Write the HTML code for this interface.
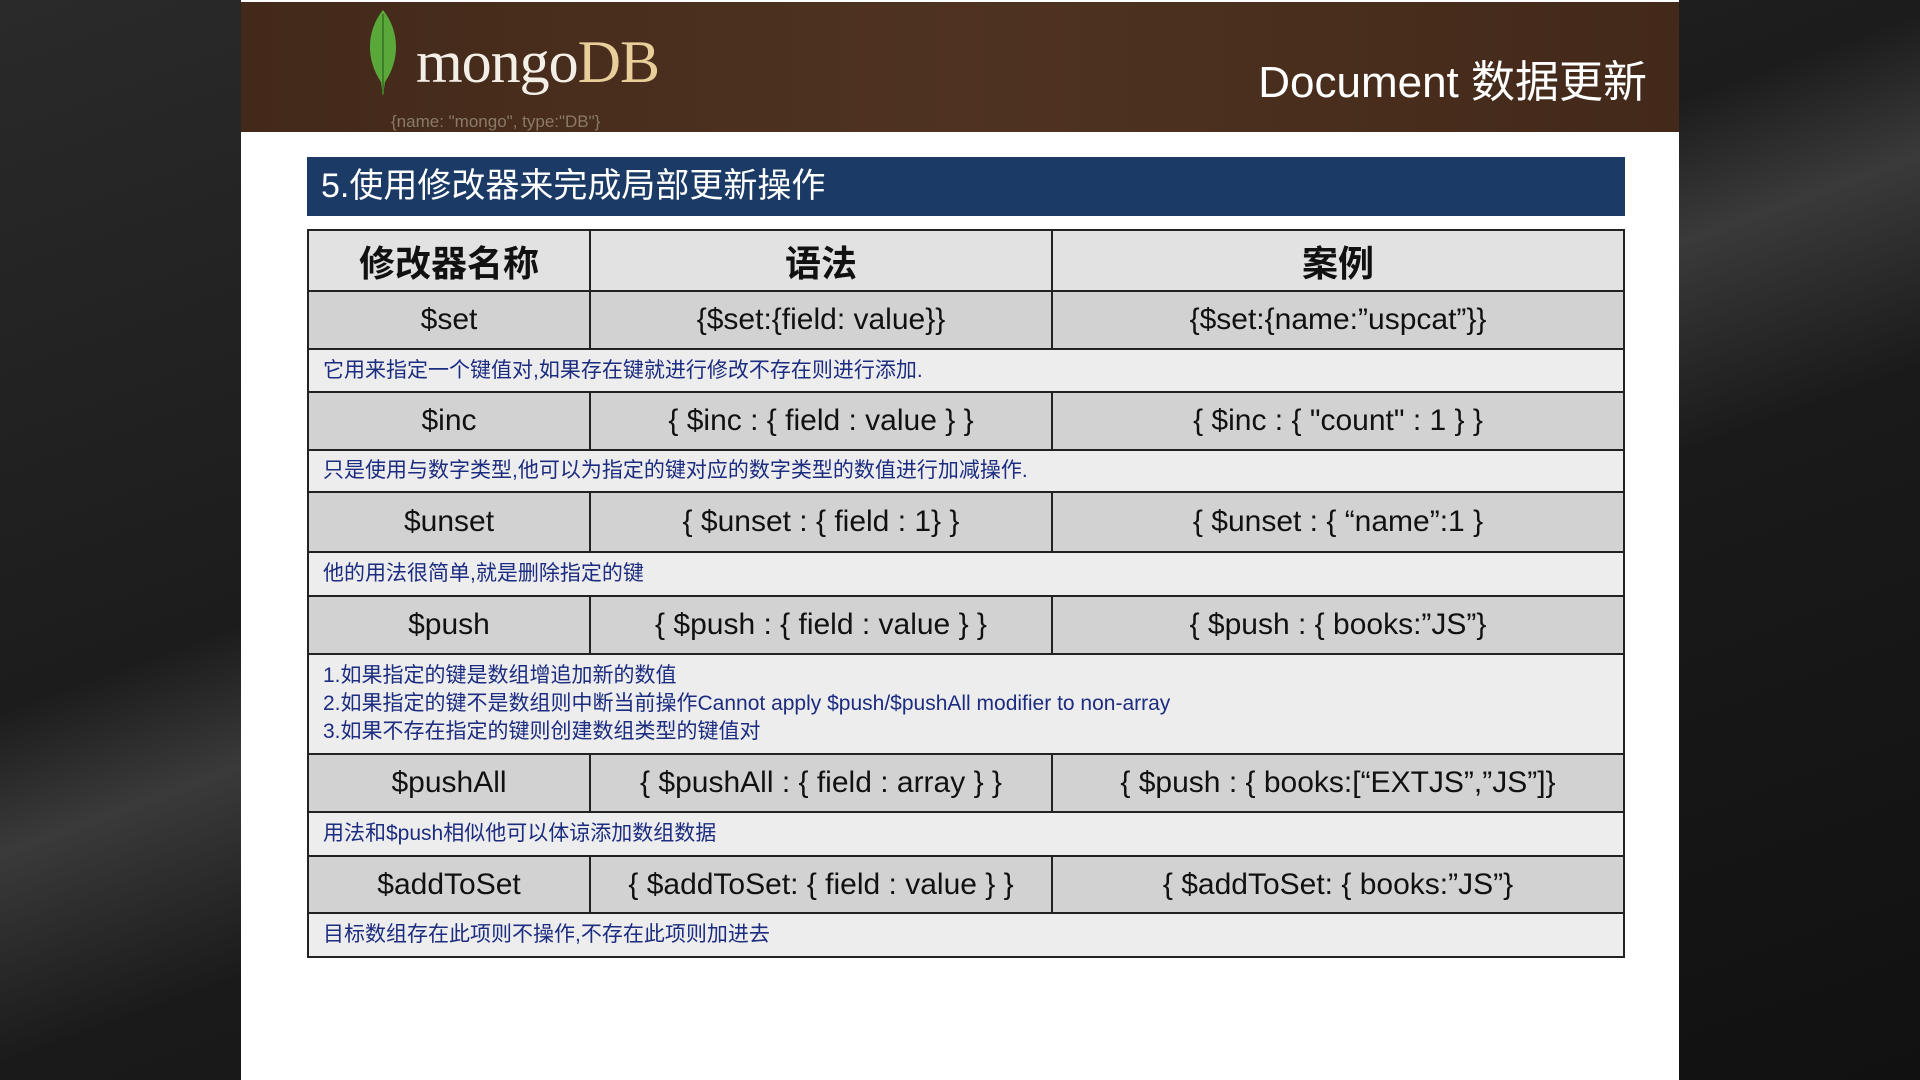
<!DOCTYPE html>
<html><head><meta charset="utf-8"><style>
*{margin:0;padding:0;box-sizing:border-box}
body{width:1920px;height:1080px;overflow:hidden;background:linear-gradient(160deg,#2a2a2a 0%,#1c1c1c 40%,#3a3a3a 48%,#1a1a1a 60%,#111 100%);font-family:"Liberation Sans","Noto Sans CJK SC",sans-serif;position:relative}
.slide{position:absolute;left:241px;top:0;width:1438px;height:1080px;background:#fff}
.hdr{position:absolute;left:0;top:2px;width:1438px;height:130px;background:linear-gradient(90deg,#43291a,#4f3320 50%,#43291a);}
.logo{position:absolute;left:175px;top:26px;color:#f4efe6;font-family:"Liberation Serif",serif;font-size:60px;letter-spacing:-1px}
.logo span{color:#e8cf9a}
.sub{position:absolute;left:150px;top:110px;color:#8a7a66;font-size:17px}
.ttl{position:absolute;right:32px;top:44px;color:#fff;font-size:44px}
.bar{position:absolute;left:66px;top:157px;width:1318px;height:59px;background:#1b3a66;color:#fff;font-size:34px;line-height:59px;padding-left:14px}
table{position:absolute;left:66px;top:229px;width:1318px;border-collapse:collapse}
td{border:2px solid #222;text-align:center;color:#111;font-size:30px}
tr.h td{background:#e2e2e2;font-size:36px;font-weight:bold;height:61px}
tr.r td{background:#d2d2d2}
tr.d td{background:#ededed;text-align:left;color:#1c2c80;font-size:21px;padding-left:14px;line-height:28px}
</style></head><body>
<div class="slide">
<div class="hdr">
<svg style="position:absolute;left:120px;top:6px" width="44" height="90" viewBox="0 0 44 90"><path d="M22 2C6 22 4 50 20 74L22 88L24 74C40 50 38 22 22 2Z" fill="#5aa83a"/><path d="M22 6L22 86" stroke="#3d7f26" stroke-width="2"/></svg>
<div class="logo">mongo<span>DB</span></div>
<div class="sub">{name: "mongo", type:"DB"}</div>
<div class="ttl">Document 数据更新</div>
</div>
<div class="bar">5.使用修改器来完成局部更新操作</div>
<table>
<colgroup><col style="width:282px"><col style="width:462px"><col></colgroup>
<tr class="h"><td>修改器名称</td><td>语法</td><td>案例</td></tr>
<tr class="r"><td style="height:58px">$set</td><td>{$set:{field: value}}</td><td>{$set:{name:”uspcat”}}</td></tr>
<tr class="d"><td colspan="3" style="height:43px">它用来指定一个键值对,如果存在键就进行修改不存在则进行添加.</td></tr>
<tr class="r"><td style="height:58px">$inc</td><td>{ $inc : { field : value } }</td><td>{ $inc : { "count" : 1 } }</td></tr>
<tr class="d"><td colspan="3" style="height:42px">只是使用与数字类型,他可以为指定的键对应的数字类型的数值进行加减操作.</td></tr>
<tr class="r"><td style="height:60px">$unset</td><td>{ $unset : { field : 1} }</td><td>{ $unset : { “name”:1 }</td></tr>
<tr class="d"><td colspan="3" style="height:44px">他的用法很简单,就是删除指定的键</td></tr>
<tr class="r"><td style="height:58px">$push</td><td>{ $push : { field : value } }</td><td>{ $push : { books:”JS”}</td></tr>
<tr class="d"><td colspan="3" style="height:100px">1.如果指定的键是数组增追加新的数值<br>2.如果指定的键不是数组则中断当前操作Cannot apply $push/$pushAll modifier to non-array<br>3.如果不存在指定的键则创建数组类型的键值对</td></tr>
<tr class="r"><td style="height:58px">$pushAll</td><td>{ $pushAll : { field : array } }</td><td>{ $push : { books:[“EXTJS”,”JS”]}</td></tr>
<tr class="d"><td colspan="3" style="height:44px">用法和$push相似他可以体谅添加数组数据</td></tr>
<tr class="r"><td style="height:57px">$addToSet</td><td>{ $addToSet: { field : value } }</td><td>{ $addToSet: { books:”JS”}</td></tr>
<tr class="d"><td colspan="3" style="height:44px">目标数组存在此项则不操作,不存在此项则加进去</td></tr>
</table>
</div>
</body></html>
